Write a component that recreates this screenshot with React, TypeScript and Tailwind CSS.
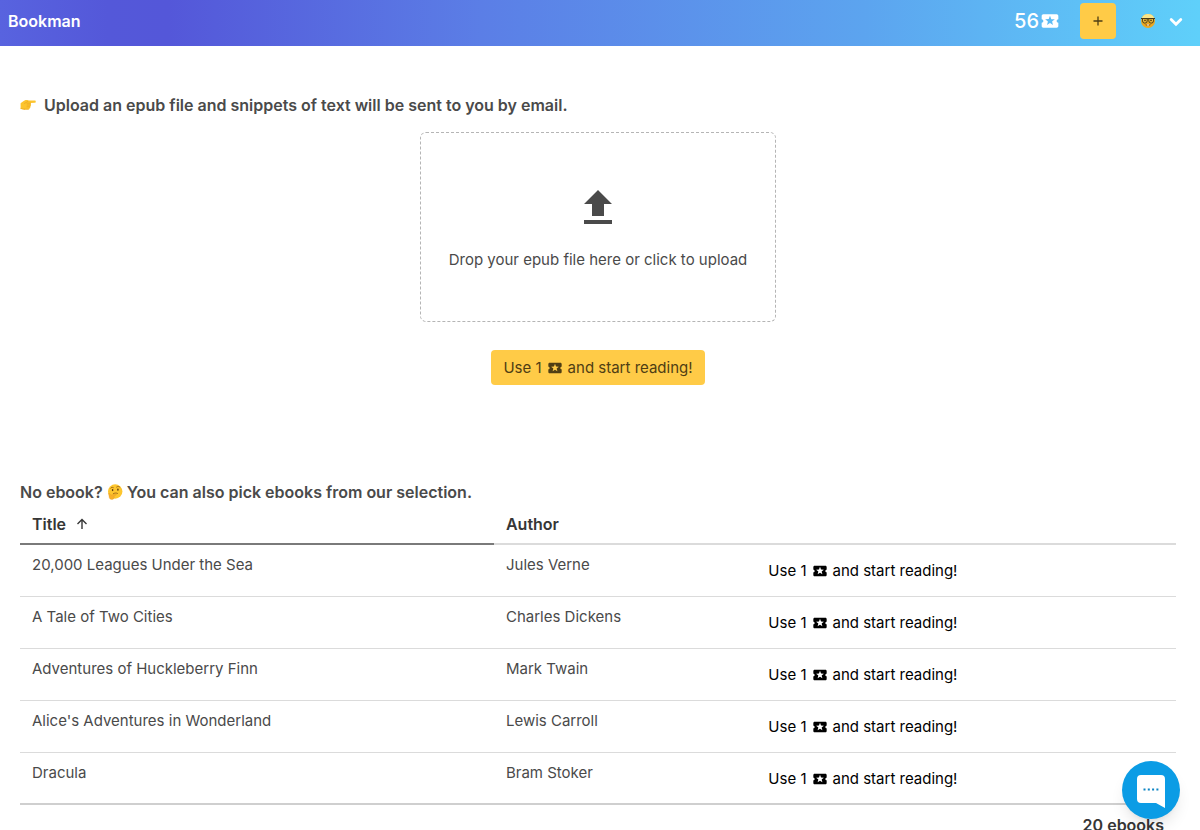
import { useState } from "react";

const books = [
  { title: "20,000 Leagues Under the Sea", author: "Jules Verne" },
  { title: "A Tale of Two Cities", author: "Charles Dickens" },
  { title: "Adventures of Huckleberry Finn", author: "Mark Twain" },
  { title: "Alice's Adventures in Wonderland", author: "Lewis Carroll" },
  { title: "Dracula", author: "Bram Stoker" },
];

function TicketIcon({ className }: { className: string }) {
  return (
    <svg className={className} viewBox="0 0 24 24" fill="currentColor" aria-hidden="true">
      <path d="M20 12c0-1.1.9-2 2-2V6c0-1.1-.9-2-2-2H4c-1.1 0-1.99.9-1.99 2v4c1.1 0 1.99.9 1.99 2s-.89 2-2 2v4c0 1.1.9 2 2 2h16c1.1 0 2-.9 2-2v-4c-1.1 0-2-.9-2-2zm-4.42 4.8L12 14.5l-3.58 2.3 1.08-4.12-3.29-2.69 4.24-.25L12 5.8l1.54 3.95 4.24.25-3.29 2.69 1.09 4.11z" />
    </svg>
  );
}

function PointingHand() {
  return (
    <svg className="w-4 h-4 shrink-0" viewBox="0 0 16 16" aria-hidden="true">
      <path
        d="M.6 6.200C2 5.300 3.200 3.900 5 3.200c1.200-.4 2.300-.3 3.500.2l6.300.2c1.300.1 1.300 2 0 2.100l-4.300.3c.8.500.7 1.500.1 1.900.5.600.3 1.500-.3 1.800.3.800-.1 1.500-.8 1.700-.1.900-.6 1.200-1.500 1.200H4.200c-1.400 0-2.200-.4-3.600-.6z"
        fill="#fcc42e"
      />
      <path
        d="M4.500 6.400 8 4.300M7 6.200h3.500M7.200 8h3.300M7 9.800h2.600M4.300 12.200h3.900M1 11.500c1.400.2 2.100.8 3.400.8"
        fill="none"
        stroke="#e8a11c"
        strokeWidth=".6"
        strokeLinecap="round"
      />
    </svg>
  );
}

function ThinkingFace() {
  return (
    <svg className="w-4 h-4 shrink-0" viewBox="0 0 16 16" aria-hidden="true">
      <circle cx="8.200" cy="7.500" r="7.200" fill="#fdc62f" />
      <path d="M3.600 4.200c.7-1 1.800-1.100 2.700-.6M9.600 3c1.200-.9 2.600-.7 3.300.2" fill="none" stroke="#8a5411" strokeWidth=".8" strokeLinecap="round" />
      <ellipse cx="5.600" cy="6.100" rx=".8" ry="1.100" fill="#5f3a10" />
      <ellipse cx="10.900" cy="5.700" rx=".8" ry="1.100" fill="#5f3a10" />
      <path d="M6.300 9.700c1.400-.8 2.900-.9 4.200-.3" fill="none" stroke="#8a5411" strokeWidth=".8" strokeLinecap="round" />
      <path
        d="M1.700 10.300c-.6-.8.400-1.500 1-.8l1.300 1.600 4.500-1.200c1-.2 1.200 1 .3 1.300l-2 .8c1 .9.600 2.800-.9 3.300-1.700.6-3.400-.2-3.700-1.800z"
        fill="#f7b02a"
        stroke="#e39520"
        strokeWidth=".3"
      />
    </svg>
  );
}

function NerdFace() {
  return (
    <svg className="w-4 h-4" viewBox="0 0 16 16" aria-hidden="true">
      <circle cx="8" cy="8" r="7" fill="#eba922" />
      <path d="M1.500 5.500a7 7 0 0 1 13 0z" fill="#fbe68a" />
      <path d="M1 5.500h14" stroke="#4a3a1a" strokeWidth="1" />
      <path d="M2.500 5.500h4.700v2.300a2.300 2.300 0 0 1-4.700 0zM8.800 5.500h4.700v2.300a2.300 2.300 0 0 1-4.700 0z" fill="#efbd3c" stroke="#3c3017" strokeWidth=".9" />
      <circle cx="5" cy="7.400" r=".8" fill="#4a3210" />
      <circle cx="11" cy="7.400" r=".8" fill="#4a3210" />
      <path d="M4.600 11.500c2 1.900 4.800 1.900 6.800 0z" fill="#9a5a14" />
      <path d="M7 11.500h2v1H7z" fill="#fff" />
    </svg>
  );
}

function ReadLabel() {
  return (
    <>
      Use 1
      <TicketIcon className="w-4 h-4" />
      and start reading!
    </>
  );
}

function Navbar() {
  return (
    <nav className="flex items-center justify-between h-[46px] pl-2 pr-4 pb-1 text-white bg-[linear-gradient(90deg,#5863df_0%,#5458d9_9%,#5457d9_14%,#5b7ee6_40%,#5ca4ef_72%,#5fd0fa_100%)]">
      <a href="#home" className="text-base font-semibold">
        Bookman
      </a>
      <div className="flex items-center">
        <span className="flex items-center gap-px text-xl font-medium">
          56
          <TicketIcon className="w-5 h-5" />
        </span>
        <button
          aria-label="Add credits"
          className="flex items-center justify-center w-9 h-9 ml-5 rounded bg-[#ffcb47] text-[#4f3e14]"
        >
          <svg className="w-4 h-4" viewBox="0 0 16 16" fill="none" stroke="currentColor" strokeWidth="1.300">
            <path d="M8 3.500v9M3.500 8h9" />
          </svg>
        </button>
        <button aria-label="Account" className="flex items-center gap-3 ml-6">
          <NerdFace />
          <svg className="w-4 h-5" viewBox="0 0 16 20" fill="none" stroke="currentColor" strokeWidth="2.800">
            <path d="m3.200 8.500 4.800 4.800 4.800-4.800" strokeLinecap="round" />
          </svg>
        </button>
      </div>
    </nav>
  );
}

export default function App() {
  const [ascending, setAscending] = useState(true);
  const rows = ascending ? books : [...books].reverse();

  return (
    <div className="font-['Inter','Liberation_Sans',sans-serif] text-[15px] leading-6 text-[#4a4a4a]">
      <Navbar />

      <main className="pl-5 pr-6 pt-[47px]">
        {/* Upload */}
        <section className="flex flex-col items-center pb-[95px]">
          <h2 className="flex items-center gap-2 self-start text-base font-semibold">
            <PointingHand />
            Upload an epub file and snippets of text will be sent to you by email.
          </h2>
          <label className="flex flex-col items-center mt-[15px] px-7 pt-[51px] pb-[49px] border border-dashed border-[#b5b5b5] rounded-md cursor-pointer">
            <input type="file" accept=".epub" className="sr-only" />
            <svg className="w-12 h-12" viewBox="0 0 24 24" fill="currentColor" aria-hidden="true">
              <path d="M9,16V10H5L12,3L19,10H15V16H9M5,20V18H19V20H5Z" />
            </svg>
            <span className="mt-4">Drop your epub file here or click to upload</span>
          </label>
          <button className="flex items-center gap-[5px] h-[35px] mt-7 px-3 rounded bg-[#ffcb47] text-[#4f3e14]">
            <ReadLabel />
          </button>
        </section>

        {/* Selection */}
        <section>
          <h2 className="flex items-center gap-1 text-base font-semibold">
            No ebook?
            <ThinkingFace />
            You can also pick ebooks from our selection.
          </h2>
          <table className="w-full table-fixed border-separate border-spacing-0">
            <thead>
              <tr className="text-left text-base text-[#363636]">
                <th className="w-[41%] px-3 pt-2 pb-[7px] border-b-2 border-[#7a7a7a] font-semibold">
                  <button onClick={() => setAscending(!ascending)} className="flex items-center gap-2">
                    Title
                    <svg
                      className={ascending ? "w-4 h-4" : "w-4 h-4 rotate-180"}
                      viewBox="0 0 16 16"
                      fill="none"
                      stroke="currentColor"
                      strokeWidth="1.400"
                    >
                      <path d="M8 13V3.500M3.500 8 8 3.500 12.500 8" />
                    </svg>
                  </button>
                </th>
                <th className="w-[22.7%] px-3 pt-2 pb-[7px] border-b-2 border-[#dbdbdb] font-semibold">Author</th>
                <td className="border-b-2 border-[#dbdbdb]"></td>
              </tr>
            </thead>
            <tbody className="align-top">
              {rows.map((book, i) => {
                const line =
                  i === rows.length - 1 ? "pb-[7px] border-b-2 border-[#cfcfcf]" : "pb-2 border-b border-[#dbdbdb]";
                return (
                  <tr key={book.title}>
                    <td className={`px-3 pt-2 ${line}`}>{book.title}</td>
                    <td className={`px-3 pt-2 ${line}`}>{book.author}</td>
                    <td className={`px-3 pt-2 ${line}`}>
                      <button className="flex items-center gap-[5px] h-[35px] text-black">
                        <ReadLabel />
                      </button>
                    </td>
                  </tr>
                );
              })}
            </tbody>
            <tfoot>
              <tr>
                <th colSpan={3} className="px-3 py-2 text-right text-base font-semibold text-[#363636]">
                  20 ebooks
                </th>
              </tr>
            </tfoot>
          </table>
        </section>
      </main>

      <button
        aria-label="Open chat"
        className="fixed right-5 bottom-[11px] flex items-center justify-center w-[58px] h-[58px] rounded-full bg-[#0b9ce5] shadow-lg"
      >
        <svg className="w-9 h-9" viewBox="0 0 36 36" aria-hidden="true">
          <path d="M8 3h20a4 4 0 0 1 4 4v29l-9-5H8a4 4 0 0 1-4-4V7a4 4 0 0 1 4-4z" fill="#fff" />
          <path d="M10.500 17.500h2m2.300 0h2m2.300 0h2m2.300 0h2" stroke="#0b84c4" strokeWidth="2" />
        </svg>
      </button>
    </div>
  );
}
